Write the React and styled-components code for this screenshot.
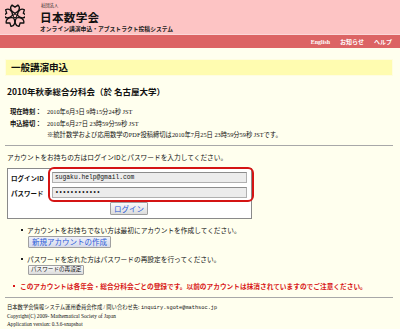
import styled, { createGlobalStyle } from "styled-components";

const GlobalStyle = createGlobalStyle`
  body {
    margin: 0;
    background: #ffffee;
    font-family: "Liberation Serif", "Noto Sans CJK JP", serif;
    color: #111;
  }
  * { box-sizing: border-box; }
`;

const Page = styled.div`
  width: 400px;
  min-height: 329px;
  background: #ffffee;
`;

// pink top banner
const Header = styled.header`
  height: 35px;
  background: #fdc4c4;
  display: flex;
  align-items: flex-start;
  gap: 15px;
  padding: 2px 0 0 5px;
  border-bottom: 1px solid #fbd8d8;
`;

const TitleBlock = styled.div`
  display: flex;
  flex-direction: column;
`;

const Corp = styled.div`
  font-size: 4.3px;
  line-height: 6.5px;
  height: 6.5px;
  padding-left: 1px;
  font-family: "Noto Sans CJK JP", sans-serif;
`;

const SiteName = styled.div`
  font-size: 11.6px;
  line-height: 16.5px;
  height: 16.5px;
  font-weight: 700;
  font-family: "Noto Sans CJK JP", serif;
  letter-spacing: 0.3px;
`;

const SubTitle = styled.div`
  font-size: 5.8px;
  line-height: 8.5px;
  height: 8.5px;
  font-weight: 700;
  font-family: "Noto Sans CJK JP", sans-serif;
  color: #222;
`;

const NavBar = styled.nav`
  height: 13px;
  background: #dc6464;
  display: flex;
  justify-content: flex-end;
  align-items: center;
  gap: 10px;
  padding-right: 8px;
`;

const NavLink = styled.a`
  color: #fff;
  font-size: 6px;
  font-weight: 700;
  text-decoration: none;
  font-family: "Liberation Serif", "Noto Sans CJK JP", serif;
`;

const Main = styled.main`
  padding: 0 7px 0 5px;
`;

const PageHeading = styled.h1`
  margin: 11px 0 0;
  height: 17px;
  line-height: 15px;
  padding-left: 5px;
  background: #fffcb0;
  border: 1px solid #fffde0;
  font-size: 9.5px;
  font-weight: 700;
  font-family: "Noto Sans CJK JP", sans-serif;
`;

const MeetingTitle = styled.h2`
  margin: 0;
  padding: 10px 0 0 2px;
  line-height: 11px;
  font-size: 8.5px;
  font-weight: 700;
  font-family: "Noto Sans CJK JP", sans-serif;
`;

const InfoList = styled.dl`
  margin: 8px 0 0;
  padding-left: 5px;
  display: grid;
  grid-template-columns: 37px auto;
  font-size: 6.3px;
`;

const InfoLabel = styled.dt`
  font-weight: 700;
  line-height: ${(p) => p.$lh}px;
`;

const InfoValue = styled.dd`
  margin: 0;
  line-height: ${(p) => p.$lh}px;
  grid-column: ${(p) => (p.$full ? "2" : "auto")};
`;

const Rule = styled.hr`
  margin: ${(p) => p.$top}px 0 0;
  border: 0;
  border-top: 1px solid #a8a8a8;
  height: 0;
`;

const Lead = styled.p`
  margin: 6px 0 0 2px;
  line-height: 10px;
  font-size: 6.7px;
  font-family: "Noto Sans CJK JP", sans-serif;
`;

const LoginBox = styled.form`
  position: relative;
  margin: 6px 0 0 2px;
  width: 245px;
  background: #fff;
  border: 1px solid #8a8a8a;
  padding: 3px 4px 3px 3px;
  display: flex;
  flex-direction: column;
  gap: 4px;
`;

const FieldRow = styled.label`
  display: flex;
  align-items: center;
`;

const FieldLabel = styled.span`
  width: 41px;
  font-size: 6.5px;
  font-weight: 700;
  font-family: "Noto Sans CJK JP", sans-serif;
`;

const TextInput = styled.input`
  width: 195px;
  height: 11px;
  margin: 0;
  padding: 0 2px;
  border: 1px solid #b0b0b0;
  border-top-color: #8c8c8c;
  background: #ececec;
  font-family: "Liberation Mono", monospace;
  font-size: 6.3px;
  color: #111;
  outline: none;
`;

const Highlight = styled.span`
  position: absolute;
  left: 40px;
  top: -2px;
  width: 206px;
  height: 35px;
  border: 2px solid #d41414;
  border-radius: 6px;
  pointer-events: none;
`;

const ButtonRow = styled.div`
  display: flex;
  justify-content: center;
`;

const Button = styled.button`
  margin: 0;
  height: ${(p) => p.$h}px;
  padding: 0 ${(p) => p.$px}px;
  font-size: ${(p) => p.$fs}px;
  font-family: "Noto Sans CJK JP", sans-serif;
  color: ${(p) => (p.$blue ? "#2a5ad8" : "#111")};
  background: ${(p) => (p.$tint ? "linear-gradient(#eef0fa, #d6daea)" : "linear-gradient(#fafafa, #dcdcdc)")};
  border: 1px solid #a0a0a0;
  border-radius: 1px;
  line-height: 1;
`;

const List = styled.ul`
  list-style: none;
  margin: 0;
  padding: 0 0 0 22px;
`;

const Item = styled.li`
  position: relative;
  margin-top: 6px;
  font-size: 6.7px;
  line-height: 10px;
  font-family: "Noto Sans CJK JP", sans-serif;

  &::before {
    content: "";
    position: absolute;
    left: -6px;
    top: 4px;
    width: 2px;
    height: 2px;
    background: #222;
  }
`;

const ItemAction = styled.div`
  margin: 1px 0 0 1px;
  display: flex;
`;

const Warning = styled.p`
  position: relative;
  margin: 6px 0 0 15px;
  font-size: 6.7px;
  line-height: 10px;
  font-weight: 700;
  color: #d81818;
  font-family: "Noto Sans CJK JP", sans-serif;

  &::before {
    content: "";
    position: absolute;
    left: -7px;
    top: 4px;
    width: 2px;
    height: 2px;
    background: #d81818;
  }
`;

const Footer = styled.footer`
  margin-top: 5px;
  padding-left: 2px;
  font-size: 5.3px;
  line-height: 8px;
`;

const Mail = styled.span`
  font-family: "Liberation Mono", monospace;
`;

function Logo() {
  const petal = "M0 -3 C-5 -5 -7 -10 -3.5 -13 L0 -10.5 L3.5 -13 C7 -10 5 -5 0 -3 Z";
  return (
    <svg width="20" height="23" viewBox="-12 -13.5 24 26" style={{ marginTop: 2 }}>
      {[0, 72, 144, 216, 288].map((a) => (
        <path key={a} d={petal} transform={`rotate(${a})`} fill="none" stroke="#111" strokeWidth="1.6" />
      ))}
      <circle r="2.2" fill="none" stroke="#111" strokeWidth="1.2" />
    </svg>
  );
}

export default function App() {
  return (
    <Page>
      <GlobalStyle />
      <Header>
        <Logo />
        <TitleBlock>
          <Corp>社団法人</Corp>
          <SiteName>日本数学会</SiteName>
          <SubTitle>オンライン講演申込・アブストラクト投稿システム</SubTitle>
        </TitleBlock>
      </Header>
      <NavBar>
        <NavLink href="#">English</NavLink>
        <NavLink href="#">お知らせ</NavLink>
        <NavLink href="#">ヘルプ</NavLink>
      </NavBar>

      <Main>
        <PageHeading>一般講演申込</PageHeading>
        <MeetingTitle>2010年秋季総合分科会（於 名古屋大学）</MeetingTitle>

        <InfoList>
          <InfoLabel $lh={13}>現在時刻：</InfoLabel>
          <InfoValue $lh={13}>2010年6月3日 9時15分24秒 JST</InfoValue>
          <InfoLabel $lh={12}>申込締切：</InfoLabel>
          <InfoValue $lh={12}>2010年6月27日 23時59分59秒 JST</InfoValue>
          <InfoValue $lh={9} $full>
            ※統計数学および応用数学のPDF投稿締切は2010年7月25日 23時59分59秒 JSTです。
          </InfoValue>
        </InfoList>

        <Rule $top={6} />
        <Lead>アカウントをお持ちの方はログインIDとパスワードを入力してください。</Lead>

        <LoginBox onSubmit={(e) => e.preventDefault()}>
          <FieldRow>
            <FieldLabel>ログインID</FieldLabel>
            <TextInput type="text" defaultValue="sugaku.help@gmail.com" />
          </FieldRow>
          <FieldRow>
            <FieldLabel>パスワード</FieldLabel>
            <TextInput type="password" defaultValue="sugakuhelp12" />
          </FieldRow>
          <ButtonRow>
            <Button $h={13} $px={3} $fs={7.5} $blue>
              ログイン
            </Button>
          </ButtonRow>
          <Highlight />
        </LoginBox>

        <List>
          <Item>
            アカウントをお持ちでない方は最初にアカウントを作成してください。
            <ItemAction>
              <Button $h={12} $px={3} $fs={7.5} $blue $tint>
                新規アカウントの作成
              </Button>
            </ItemAction>
          </Item>
          <Item>
            パスワードを忘れた方はパスワードの再設定を行ってください。
            <ItemAction>
              <Button $h={10} $px={2} $fs={5.6}>
                パスワードの再設定
              </Button>
            </ItemAction>
          </Item>
        </List>

        <Warning>
          このアカウントは各年会・総合分科会ごとの登録です。以前のアカウントは抹消されていますのでご注意ください。
        </Warning>

        <Rule $top={6} />
        <Footer>
          <div>
            日本数学会情報システム運用委員会作成 / 問い合わせ先: <Mail>inquiry.sgote@mathsoc.jp</Mail>
          </div>
          <div>Copyright(C) 2009- Mathematical Society of Japan</div>
          <div>Application version: 0.3.6-snapshot</div>
        </Footer>
      </Main>
    </Page>
  );
}
